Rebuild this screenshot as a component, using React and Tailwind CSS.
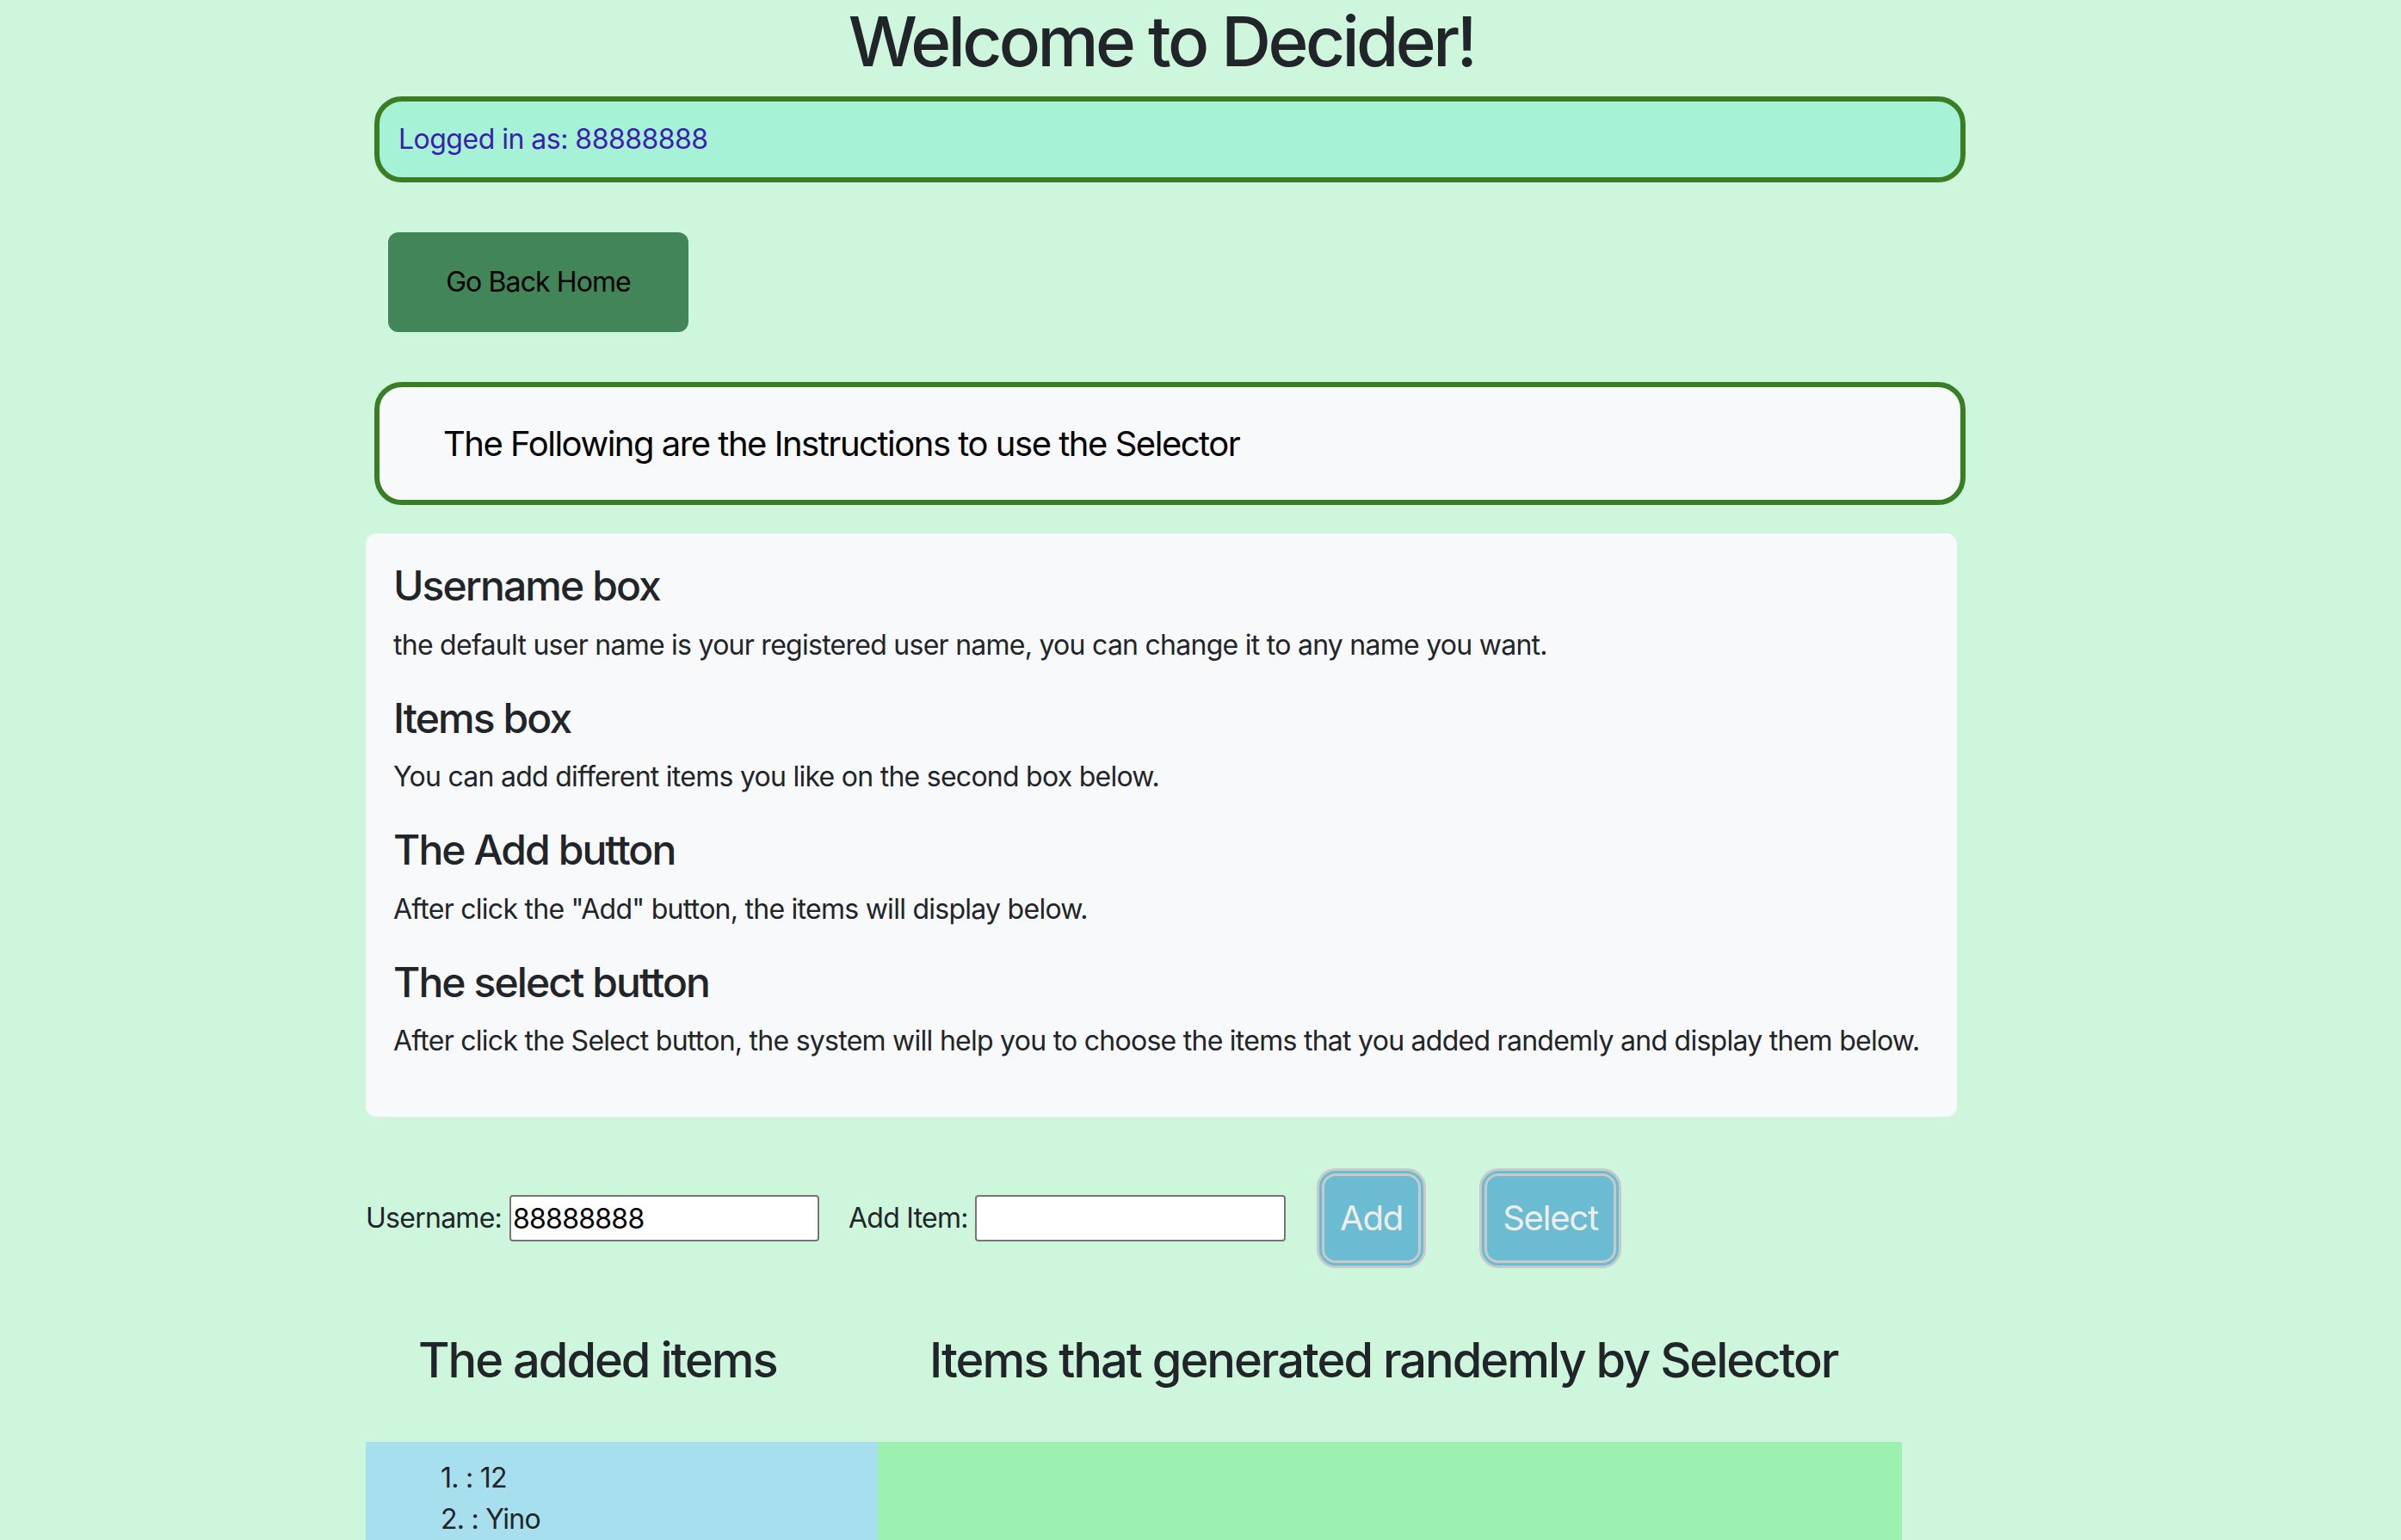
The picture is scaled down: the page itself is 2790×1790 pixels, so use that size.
import { useState } from "react";

const sections = [
  {
    title: "Username box",
    text: "the default user name is your registered user name, you can change it to any name you want.",
  },
  {
    title: "Items box",
    text: "You can add different items you like on the second box below.",
  },
  {
    title: "The Add button",
    text: 'After click the "Add" button, the items will display below.',
  },
  {
    title: "The select button",
    text: "After click the Select button, the system will help you to choose the items that you added randemly and display them below.",
  },
];

function App() {
  const [username, setUsername] = useState("88888888");
  const [item, setItem] = useState("");
  const [items] = useState(["12", "Yino"]);

  return (
    <div className="min-h-screen bg-[#cdf6dc] font-[Inter,'Liberation_Sans',sans-serif] text-[#212529] text-[32px] leading-[48px] tracking-[-0.023em]">
      <div className="ml-[425px] w-[1849px]">
        <h1 className="text-center text-[80px] leading-[96px] font-medium tracking-[-0.045em] mb-[16px]">Welcome to Decider!</h1>

        {/* Logged in */}
        <div className="ml-[10px] w-[1849px] border-[6px] border-[#3a7d23] rounded-[32px] bg-[#a6f2d6] py-[20px] pl-[22px] text-[#3b1db3] tracking-[-0.016em]">
          Logged in as: {username}
        </div>

        <button className="mt-[58px] ml-[26px] w-[349px] h-[116px] rounded-[12px] bg-[#428559] text-black text-[32px] leading-[48px] tracking-[-0.028em]">
          Go Back Home
        </button>

        {/* Instructions header */}
        <div className="mt-[58px] ml-[10px] w-[1849px] border-[6px] border-[#3a7d23] rounded-[32px] bg-[#f8f9fa] pt-[42px] pb-[41px] pl-[74px] text-black text-[40px] leading-[48px] tracking-[-0.037em]">
          The Following are the Instructions to use the Selector
        </div>

        <div className="mt-[33px] rounded-[12px] bg-[#f8f9fa] p-[32px]">
          {sections.map((s) => (
            <div key={s.title}>
              <h4 className="text-[48px] leading-[57.6px] font-medium tracking-[-0.04em] mb-[16px]">{s.title}</h4>
              <p className="mb-[32px]">{s.text}</p>
            </div>
          ))}
        </div>

        {/* Inputs */}
        <div className="mt-[60px] flex items-center h-[116px]">
          <label className="w-[167px] shrink-0">Username:</label>
          <input
            className="w-[360px] h-[54px] bg-white border-2 border-[#767676] rounded-[4px] px-[2px] text-black text-[32px] outline-none"
            value={username}
            onChange={(e) => setUsername(e.target.value)}
          />
          <label className="ml-[34px] w-[147px] shrink-0">Add Item:</label>
          <input
            className="w-[361px] h-[54px] bg-white border-2 border-[#767676] rounded-[4px] px-[2px] text-black text-[32px] outline-none"
            value={item}
            onChange={(e) => setItem(e.target.value)}
          />
          <button className="ml-[36px] w-[127px] h-[116px] border-[9px] border-double border-[#c9c9c9] rounded-[22px] bg-[#6bbcd2] text-[#eeeeee] text-[40px] leading-[48px] tracking-[-0.03em]">
            Add
          </button>
          <button className="ml-[62px] w-[165px] h-[116px] border-[9px] border-double border-[#c9c9c9] rounded-[22px] bg-[#6bbcd2] text-[#eeeeee] text-[40px] leading-[48px] tracking-[-0.03em]">
            Select
          </button>
        </div>

        {/* Results */}
        <div className="mt-[74px] flex w-[1785px]">
          <h3 className="w-[595px] pl-[61px] text-[56px] leading-[67px] font-medium tracking-[-0.036em]">The added items</h3>
          <h3 className="w-[1190px] pl-[60px] text-[56px] leading-[67px] font-medium tracking-[-0.036em] whitespace-nowrap">Items that generated randemly by Selector</h3>
        </div>

        <div className="mt-[61px] flex w-[1785px]">
          <div className="w-[595px] bg-[#a8dfee] pt-[18px] pb-[32px] pl-[87px]">
            <ol>
              {items.map((it, i) => (
                <li key={i}>{i + 1}. : {it}</li>
              ))}
            </ol>
          </div>
          <div className="w-[1190px] bg-[#9cf0b0]" />
        </div>
      </div>
    </div>
  );
}

export default App;
